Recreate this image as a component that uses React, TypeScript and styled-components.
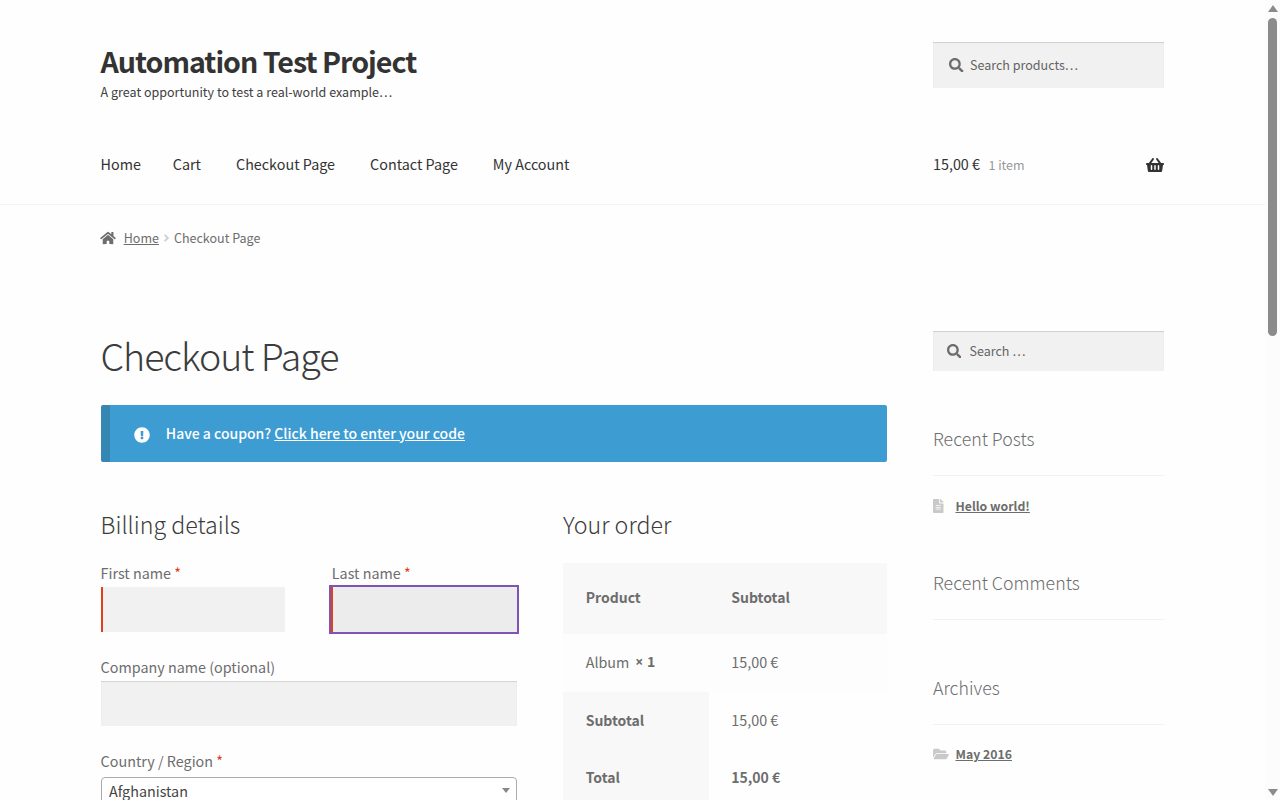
import React from "react";
import styled, { createGlobalStyle } from "styled-components";
import {
  FaSearch,
  FaHome,
  FaShoppingBasket,
  FaFileAlt,
  FaFolderOpen,
  FaExclamationCircle,
  FaAngleRight,
} from "react-icons/fa";

const GlobalStyle = createGlobalStyle`
  * { box-sizing: border-box; }
  html, body { margin: 0; padding: 0; overflow: hidden; background: #fefefe; }
  body {
    font-family: "Source Sans Pro", "Noto Sans CJK SC", "Open Sans", sans-serif;
    font-size: 14.35px;
    line-height: 26px;
    color: #6d6d6d;
  }
  h1, h2, p, ul { margin: 0; padding: 0; }
  ul { list-style: none; }
  a { color: inherit; }
`;

const Viewport = styled.div`
  display: flex;
  width: 1280px;
  height: 800px;
  overflow: hidden;
`;

const Page = styled.div`
  flex: 1;
  height: 800px;
  overflow: hidden;
`;

const Header = styled.header`
  height: 205px;
  padding: 42px 101px 0 100.6px;
  border-bottom: 1px solid #f3f3f3;
`;

const HeaderRow = styled.div`
  display: flex;
  justify-content: space-between;
  height: 102px;
`;

const SiteTitle = styled.h1`
  height: 40px;
  font-size: 28.6px;
  line-height: 38px;
  font-weight: 700;
  letter-spacing: -1px;
  color: #333;
`;

const Tagline = styled.p`
  font-size: 12.52px;
  line-height: 20px;
  color: #404040;
`;

const SearchBox = styled.label<{ $height: number; $gap: number; $pad: number }>`
  display: flex;
  align-items: center;
  gap: ${(p) => p.$gap}px;
  width: 231px;
  height: ${(p) => p.$height}px;
  padding-left: ${(p) => p.$pad}px;
  background: #f1f1f1;
  box-shadow: inset 0 1px 1px rgba(0, 0, 0, 0.14);
  font-size: 12.52px;
  color: #636363;
  svg { width: 14.5px; height: 14.5px; color: #6d6d6d; }
`;

const NavRow = styled.div`
  display: flex;
  justify-content: space-between;
  height: 40px;
  line-height: 40px;
  color: #333;
`;

const NavList = styled.ul`
  display: flex;
  gap: 35px;
  li:first-child { margin-right: -3.2px; }
`;

const CartLink = styled.div`
  display: flex;
  align-items: center;
  width: 231px;
  svg { margin: 2px 0 0 auto; width: 18px; height: 16px; }
`;

const ItemCount = styled.span`
  margin-left: 8.4px;
  padding-top: 2px;
  font-size: 12.5px;
  color: #999;
`;

const Breadcrumb = styled.nav`
  display: flex;
  align-items: center;
  height: 126px;
  padding: 20px 0 80px 100px;
  font-size: 12.52px;
`;

const HomeIcon = styled(FaHome)`
  width: 16px;
  height: 14px;
  margin-right: 7.7px;
`;

const Separator = styled(FaAngleRight)`
  width: 7px;
  height: 12px;
  margin: 0 4px;
  color: #d0d0d0;
`;

const Columns = styled.div`
  display: flex;
  justify-content: space-between;
  padding: 0 101px 0 100.6px;
`;

const Main = styled.main`
  width: 786px;
`;

const PageTitle = styled.h1`
  height: 74.4px;
  line-height: 48px;
  font-size: 37.6px;
  font-weight: 300;
  letter-spacing: -1.05px;
  color: #3c3c3c;
`;

const Notice = styled.div`
  display: flex;
  align-items: center;
  height: 57px;
  padding-left: 24.2px;
  border-left: 9.5px solid #3586b3;
  border-radius: 2px;
  background: #3d9cd2;
  color: #fff;
  font-size: 14px;
  font-weight: 500;
  svg { width: 16px; height: 16px; margin: 2px 16px 0 0; }
  span { padding-bottom: 2px; }
`;

const Halves = styled.div`
  display: flex;
  justify-content: space-between;
  padding-top: 42.6px;
`;

const Billing = styled.section`
  width: 416.2px;
`;

const Order = styled.section`
  width: 323.6px;
`;

const SectionTitle = styled.h2<{ $height: number }>`
  height: ${(p) => p.$height}px;
  line-height: 38px;
  font-size: 23.2px;
  font-weight: 300;
  color: #3c3c3c;
`;

const FieldRow = styled.div`
  display: flex;
  justify-content: space-between;
`;

const Field = styled.div<{ $width: number }>`
  width: ${(p) => p.$width}px;
  height: 94px;
`;

const Label = styled.label`
  display: block;
  height: 25px;
  line-height: 21px;
`;

const Required = styled.span`
  color: #e2401c;
`;

const Input = styled.div<{ $required?: boolean; $focused?: boolean }>`
  height: 45px;
  background: ${(p) => (p.$focused ? "#ececec" : "#f1f1f1")};
  border-left: ${(p) => (p.$required ? "2px solid #e2401c" : "0")};
  box-shadow: ${(p) => (p.$required ? "none" : "inset 0 1px 1px rgba(0, 0, 0, 0.125)")};
  outline: ${(p) => (p.$focused ? "2px solid #7f54b3" : "none")};
  margin-left: ${(p) => (p.$focused ? "-0.6px" : "0")};
`;

const Select = styled.div`
  display: flex;
  align-items: center;
  justify-content: space-between;
  height: 28px;
  margin-top: 2px;
  padding: 0 6px 0 7.5px;
  border: 1px solid #aaa;
  border-radius: 4px;
  background: #fff;
  color: #444;
`;

const Caret = styled.span`
  border: 4px solid transparent;
  border-top: 5px solid #888;
  border-bottom: 0;
`;

const OrderTable = styled.div`
  display: grid;
  grid-template-columns: 145.6px 178px;
  grid-template-rows: 71px 58px 57px 57px;
`;

const Cell = styled.div<{ $bg?: string; $bold?: boolean; $lift?: number }>`
  display: flex;
  align-items: center;
  padding: 0 0 ${(p) => p.$lift ?? 0}px 22.7px;
  background: ${(p) => p.$bg ?? "transparent"};
  font-size: ${(p) => (p.$bold ? 14 : 14.35)}px;
  font-weight: ${(p) => (p.$bold ? 700 : 400)};
  white-space: pre;
`;

const Quantity = styled.strong`
  margin-left: 6px;
  font-family: "Open Sans", "Noto Sans CJK SC", sans-serif;
  font-size: 14px;
  span { font-family: "Noto Sans CJK SC", sans-serif; }
`;

const Sidebar = styled.aside`
  width: 231px;
`;

const Widget = styled.section<{ $height: number }>`
  height: ${(p) => p.$height}px;
`;

const WidgetTitle = styled.h2`
  height: 51px;
  line-height: 26px;
  border-bottom: 1px solid #f2f2f2;
  font-size: 17.75px;
  font-weight: 300;
`;

const WidgetItem = styled.div<{ $top: number }>`
  display: flex;
  align-items: center;
  height: 22px;
  margin-top: ${(p) => p.$top}px;
  font-size: 12.25px;
  font-weight: 700;
`;

const ItemIcon = styled.span<{ $width: number }>`
  display: flex;
  width: 22.5px;
  color: #c9c9c9;
  svg { width: ${(p) => p.$width}px; height: 14px; }
`;

const Scrollbar = styled.div`
  display: flex;
  flex-direction: column;
  align-items: center;
  width: 15px;
  height: 800px;
  padding: 5px 0 4px;
  background: #fcfcfc;
`;

const ArrowUp = styled.span`
  border: 5px solid transparent;
  border-bottom: 7px solid #8b8b8b;
  border-top: 0;
`;

const Thumb = styled.div`
  width: 9px;
  height: 318px;
  margin: 6px 0 auto;
  border-radius: 5px;
  background: #8b8b8b;
`;

const ArrowDown = styled.span`
  border: 5px solid transparent;
  border-top: 7px solid #8b8b8b;
  border-bottom: 0;
`;

const navItems = ["Home", "Cart", "Checkout Page", "Contact Page", "My Account"];

export default function App() {
  return (
    <>
      <GlobalStyle />
      <Viewport>
        <Page>
          <Header>
            <HeaderRow>
              <div>
                <SiteTitle>Automation Test Project</SiteTitle>
                <Tagline>A great opportunity to test a real-world example…</Tagline>
              </div>
              <SearchBox $height={46} $gap={6.5} $pad={16}>
                <FaSearch />
                <span>Search products…</span>
              </SearchBox>
            </HeaderRow>
            <NavRow>
              <NavList>
                {navItems.map((item) => (
                  <li key={item}>{item}</li>
                ))}
              </NavList>
              <CartLink>
                <span>15,00 €</span>
                <ItemCount>1 item</ItemCount>
                <FaShoppingBasket />
              </CartLink>
            </NavRow>
          </Header>
          <Breadcrumb>
            <HomeIcon />
            <a href="#home">Home</a>
            <Separator />
            <span>Checkout Page</span>
          </Breadcrumb>
          <Columns>
            <Main>
              <PageTitle>Checkout Page</PageTitle>
              <Notice>
                <FaExclamationCircle />
                <span>
                  Have a coupon? <a href="#coupon">Click here to enter your code</a>
                </span>
              </Notice>
              <Halves>
                <Billing>
                  <SectionTitle $height={57}>Billing details</SectionTitle>
                  <FieldRow>
                    <Field $width={184.4}>
                      <Label>
                        First name <Required>*</Required>
                      </Label>
                      <Input $required />
                    </Field>
                    <Field $width={185}>
                      <Label>
                        Last name <Required>*</Required>
                      </Label>
                      <Input $required $focused />
                    </Field>
                  </FieldRow>
                  <Field $width={416.2}>
                    <Label>Company name (optional)</Label>
                    <Input />
                  </Field>
                  <Field $width={416.2}>
                    <Label>
                      Country / Region <Required>*</Required>
                    </Label>
                    <Select>
                      <span>Afghanistan</span>
                      <Caret />
                    </Select>
                  </Field>
                </Billing>
                <Order>
                  <SectionTitle $height={58}>Your order</SectionTitle>
                  <OrderTable>
                    <Cell $bg="#f8f8f8" $bold $lift={2}>Product</Cell>
                    <Cell $bg="#f8f8f8" $bold $lift={2}>Subtotal</Cell>
                    <Cell $bg="#fdfdfd" $lift={2}>
                      Album
                      <Quantity>
                        × <span>1</span>
                      </Quantity>
                    </Cell>
                    <Cell $bg="#fdfdfd" $lift={2}>15,00 €</Cell>
                    <Cell $bg="#f8f8f8" $bold>Subtotal</Cell>
                    <Cell>15,00 €</Cell>
                    <Cell $bg="#f8f8f8" $bold>Total</Cell>
                    <Cell $bold>15,00 €</Cell>
                  </OrderTable>
                </Order>
              </Halves>
            </Main>
            <Sidebar>
              <Widget $height={94}>
                <SearchBox $height={40} $gap={8.5} $pad={13.5}>
                  <FaSearch />
                  <span>Search …</span>
                </SearchBox>
              </Widget>
              <Widget $height={144}>
                <WidgetTitle>Recent Posts</WidgetTitle>
                <WidgetItem $top={19}>
                  <ItemIcon $width={10.5}><FaFileAlt /></ItemIcon>
                  <a href="#hello">Hello world!</a>
                </WidgetItem>
              </Widget>
              <Widget $height={105}>
                <WidgetTitle>Recent Comments</WidgetTitle>
              </Widget>
              <Widget $height={144}>
                <WidgetTitle>Archives</WidgetTitle>
                <WidgetItem $top={18}>
                  <ItemIcon $width={16}><FaFolderOpen /></ItemIcon>
                  <a href="#archive">May 2016</a>
                </WidgetItem>
              </Widget>
            </Sidebar>
          </Columns>
        </Page>
        <Scrollbar>
          <ArrowUp />
          <Thumb />
          <ArrowDown />
        </Scrollbar>
      </Viewport>
    </>
  );
}
